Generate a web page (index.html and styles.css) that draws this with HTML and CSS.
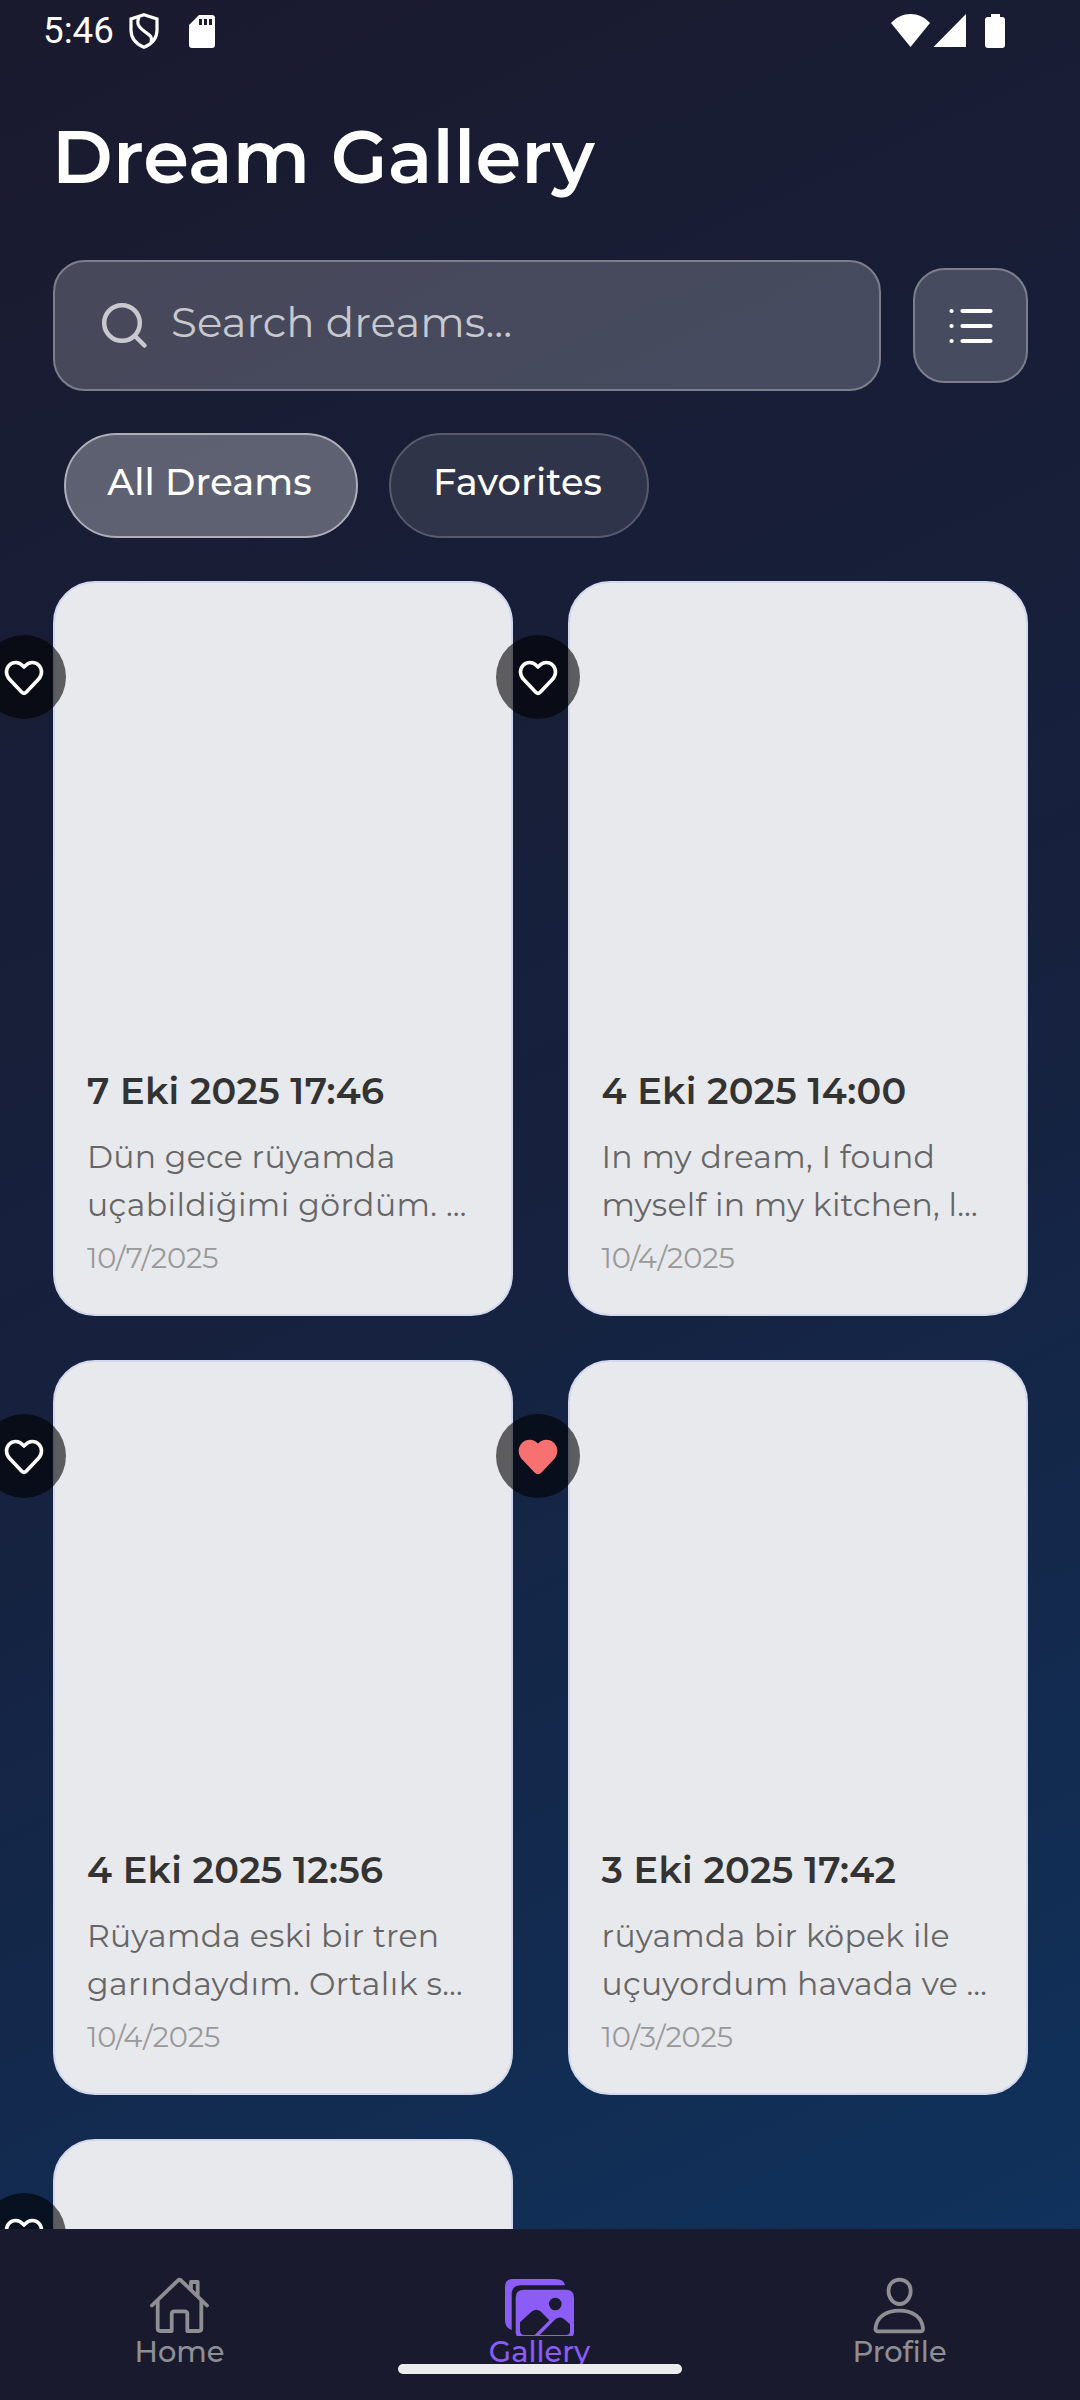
FILE: index.html
```html
<!DOCTYPE html>
<html lang="en">
<head>
<meta charset="utf-8">
<title>Dream Gallery</title>
<link rel="stylesheet" href="styles.css">
</head>
<body>
<svg width="0" height="0" class="defs"><symbol id="heart" viewBox="0 0 84 84"><path d="M42 32l-1.200-1.100C38.800 28.700 36.400 27.500 33.800 27.500 28.600 27.500 24.500 31.700 24.500 37c0 3 1.200 5.300 3 7.200L39.800 57.200Q42 59.300 44.200 57.200L56.500 44.200c1.800-1.900 3-4.200 3-7.200 0-5.300-4.100-9.500-9.300-9.500-2.600 0-5 1.200-7 3.400z"/></symbol></svg>
<div class="app">
  <div class="status">
    <span class="clock">5:46</span>
    <svg class="shield" width="30" height="36" viewBox="0 0 30 36" fill="none" stroke="#fff" stroke-width="3.200"><path d="M15 1.800 28 6v11c0 8-5 14-13 17.200C7 31 2 25 2 17V6z"/><path d="M10 4c-3 7 0 10 5 14s9 5 7 11"/></svg>
    <svg class="sd" width="26" height="33" viewBox="0 0 26 33"><path fill="#fff" fill-rule="evenodd" d="M10 0h13q3 0 3 3v27q0 3-3 3H3q-3 0-3-3V10zM10 4v6h3V4zm5 0v6h3V4zm5 0v6h3V4z"/></svg>
    <svg class="signals" width="115" height="34" viewBox="0 0 115 34" fill="#fff"><path d="M1 9C12-3 29-3 40 9L20.500 33z"/><path d="M43.500 33 76 0v33z"/><path d="M101 0h9v3h2q3 0 3 3v25q0 3-3 3H98q-3 0-3-3V6q0-3 3-3h3z"/></svg>
  </div>
  <h1 class="title">Dream Gallery</h1>
  <div class="search-row">
    <div class="search">
      <svg width="50" height="50" viewBox="0 0 50 50" fill="none" stroke="#c8c8cf" stroke-linecap="round" stroke-width="4.500"><circle cx="22" cy="22" r="17.800"/><path d="m35 35 9.500 9.500"/></svg>
      <span class="placeholder">Search dreams...</span>
    </div>
    <div class="list-btn">
      <svg width="46" height="38" viewBox="0 0 46 38" stroke="#fff" stroke-width="4.200" stroke-linecap="round"><path d="M3.500 4h.1M3.500 19h.1M3.500 34h.1M14.500 4h28M14.500 19h28M14.500 34h28"/></svg>
    </div>
  </div>
  <div class="chips">
    <span class="chip active">All Dreams</span>
    <span class="chip fav">Favorites</span>
  </div>
  <div class="grid">
    <article class="card">
      <svg class="badge"><use href="#heart"/></svg>
      <h2>7 Eki 2025 17:46</h2>
      <p>Dün gece rüyamda<br><span class="loose">uçabildiğimi gördüm. …</span></p>
      <time>10/7/2025</time>
    </article>
    <article class="card">
      <svg class="badge"><use href="#heart"/></svg>
      <h2>4 Eki 2025 14:00</h2>
      <p>In my dream, I found<br>myself in my kitchen, l…</p>
      <time>10/4/2025</time>
    </article>
    <article class="card">
      <svg class="badge"><use href="#heart"/></svg>
      <h2>4 Eki 2025 12:56</h2>
      <p>Rüyamda eski bir tren<br><span class="loose">garındaydım. Ortalık s…</span></p>
      <time>10/4/2025</time>
    </article>
    <article class="card">
      <svg class="badge liked"><use href="#heart"/></svg>
      <h2>3 Eki 2025 17:42</h2>
      <p>rüyamda bir köpek ile<br>uçuyordum havada ve …</p>
      <time>10/3/2025</time>
    </article>
    <article class="card">
      <svg class="badge"><use href="#heart"/></svg>
    </article>
  </div>
  <nav class="tabs">
    <div class="tab">
      <svg width="60" height="60" viewBox="0 0 60 60" fill="none" stroke="currentColor" stroke-width="3.800" stroke-linecap="round" stroke-linejoin="round"><path d="M1.900 29.500 27.800 4.600q1.700-1.700 3.400 0L57 29.500"/><path d="M7.700 25v27.500q0 2.500 2.500 2.500h11.500V38q0-2.700 2.700-2.700h10.200q2.700 0 2.700 2.700v17h11.500q2.500 0 2.500-2.500V25M41 13V6h6.700v13.500"/></svg>
      <span>Home</span>
    </div>
    <div class="tab on">
      <svg width="72" height="60" viewBox="0 0 72 60"><path fill="currentColor" d="M7.700 54.300Q1 51 1 45V11Q1 3 9 3h42q9 0 10 6.300H17q-9.300 0-9.300 9.300z"/><path fill="currentColor" fill-rule="evenodd" d="M20 13.700h42q8 0 8 8V56q0 2.500-1 4H12.700q-1-1.500-1-4V21.700q0-8 8.300-8zM51.300 21.700a6.300 6.300 0 1 0 0 12.600 6.300 6.300 0 0 0 0-12.600zM16 46.300V54q0 5 4.500 5h10.200L45.300 44.300 36.500 35.300Q32.300 32 28 35.300zM35.700 59H62q4 0 4-4v-6.700l-6-5.200Q56 40 51.300 43.300z"/></svg>
      <span>Gallery</span>
    </div>
    <div class="tab">
      <svg width="54" height="60" viewBox="0 0 54 60" fill="none" stroke="currentColor" stroke-width="3.800" stroke-linejoin="round"><path d="M26.600 3.600c6.300 0 11.100 4.700 11.100 11.400S33 28 26.600 28 15.500 21.700 15.500 15 20.300 3.600 26.600 3.600zM2.500 52.500C3.500 41 13 34.600 26.300 34.600S49 41 50 52.500q.2 2.900-2.600 2.900H5.100q-2.800 0-2.600-2.900z"/></svg>
      <span>Profile</span>
    </div>
    <i class="handle"></i>
  </nav>
</div>
</body>
</html>
```
FILE: styles.css
```css
* { box-sizing: border-box; }
body { margin: 0; font-family: Montserrat, Inter, sans-serif; color: #fff; }
.defs { position: absolute; }
.app { width: 1080px; height: 2400px; overflow: hidden; display: flex; flex-direction: column; background: linear-gradient(155deg, #1a1a2e 0%, #16213e 50%, #0f3460 100%); }
.status { height: 62px; flex: none; display: flex; align-items: center; padding: 0 75px 0 43px; font: 36.75px/62px Roboto, sans-serif; }
.clock { width: 70px; }
.shield { margin-left: 16px; }
.sd { margin-left: 30px; }
.signals { margin-left: auto; }
.title { margin: 40px 51px 0 52px; height: 110px; flex: none; font-size: 73.5px; line-height: 110px; font-weight: 600; letter-spacing: .18px; }
.search-row { flex: none; margin: 48px 52px 0 53px; display: flex; align-items: center; justify-content: space-between; }
.search { width: 828px; height: 131px; border: 2px solid #7d7e8b; border-radius: 32px; background: rgba(255,255,255,.2); display: flex; align-items: center; padding-left: 45px; }
.placeholder { margin-left: 21px; padding-bottom: 7px; font-size: 42px; color: #c8c8cf; letter-spacing: .05px; }
.list-btn { width: 115px; height: 115px; border: 2px solid #7d7e8b; border-radius: 32px; background: rgba(255,255,255,.2); display: grid; place-items: center; }
.chips { flex: none; display: flex; gap: 31px; margin: 42px 0 0 64px; }
.chip { height: 105px; width: 294px; border: 2px solid #595b6c; border-radius: 53px; background: rgba(255,255,255,.1); display: grid; place-items: center; padding: 0 3px 8px 0; font-size: 36.75px; font-weight: 500; letter-spacing: .12px; }
.chip.active { border-color: #adaeb7; background: rgba(255,255,255,.3); }
.chip.fav { width: 260px; }
.grid { flex: 1; min-height: 0; margin: 43px 52px 0 53px; display: grid; grid-template-columns: 460px 460.5px; column-gap: 54.5px; grid-auto-rows: 735px; row-gap: 44px; }
.card { position: relative; border-radius: 42px; border: 2px solid #d3d8ee; background: #e8e9ed; padding: 484px 0 0 32px; color: #333; }
.card h2 { margin: 0; font-size: 36.75px; line-height: 48px; font-weight: 600; letter-spacing: .28px; }
.card p { margin: 18px 0 0; font-size: 31.5px; line-height: 48px; color: #666; white-space: nowrap; letter-spacing: .28px; }
.loose { letter-spacing: .42px; }
.card time { display: block; margin-top: 11px; font-size: 28.9px; line-height: 36px; color: #999; letter-spacing: -.15px; }
.badge { position: absolute; left: -73.5px; top: 52px; width: 84px; height: 84px; border-radius: 50%; background: rgba(0,0,0,.6); fill: none; stroke: #fff; stroke-width: 3.6; stroke-linejoin: round; }
.badge.liked { fill: #f87171; stroke: #f87171; }
.tabs { position: relative; flex: none; height: 171px; background: #1a1a2e; display: flex; z-index: 1; }
.tab { flex: 1; display: flex; flex-direction: column; align-items: center; padding: 47px 0 0; font-size: 28.9px; line-height: 32px; font-weight: 500; color: #8e8e93; }
.tab span { margin-left: -1px; }
.tab.on { color: #8b5cf6; }
.handle { position: absolute; left: 398px; top: 135px; width: 284px; height: 10px; border-radius: 5px; background: #ececf0; }
```
